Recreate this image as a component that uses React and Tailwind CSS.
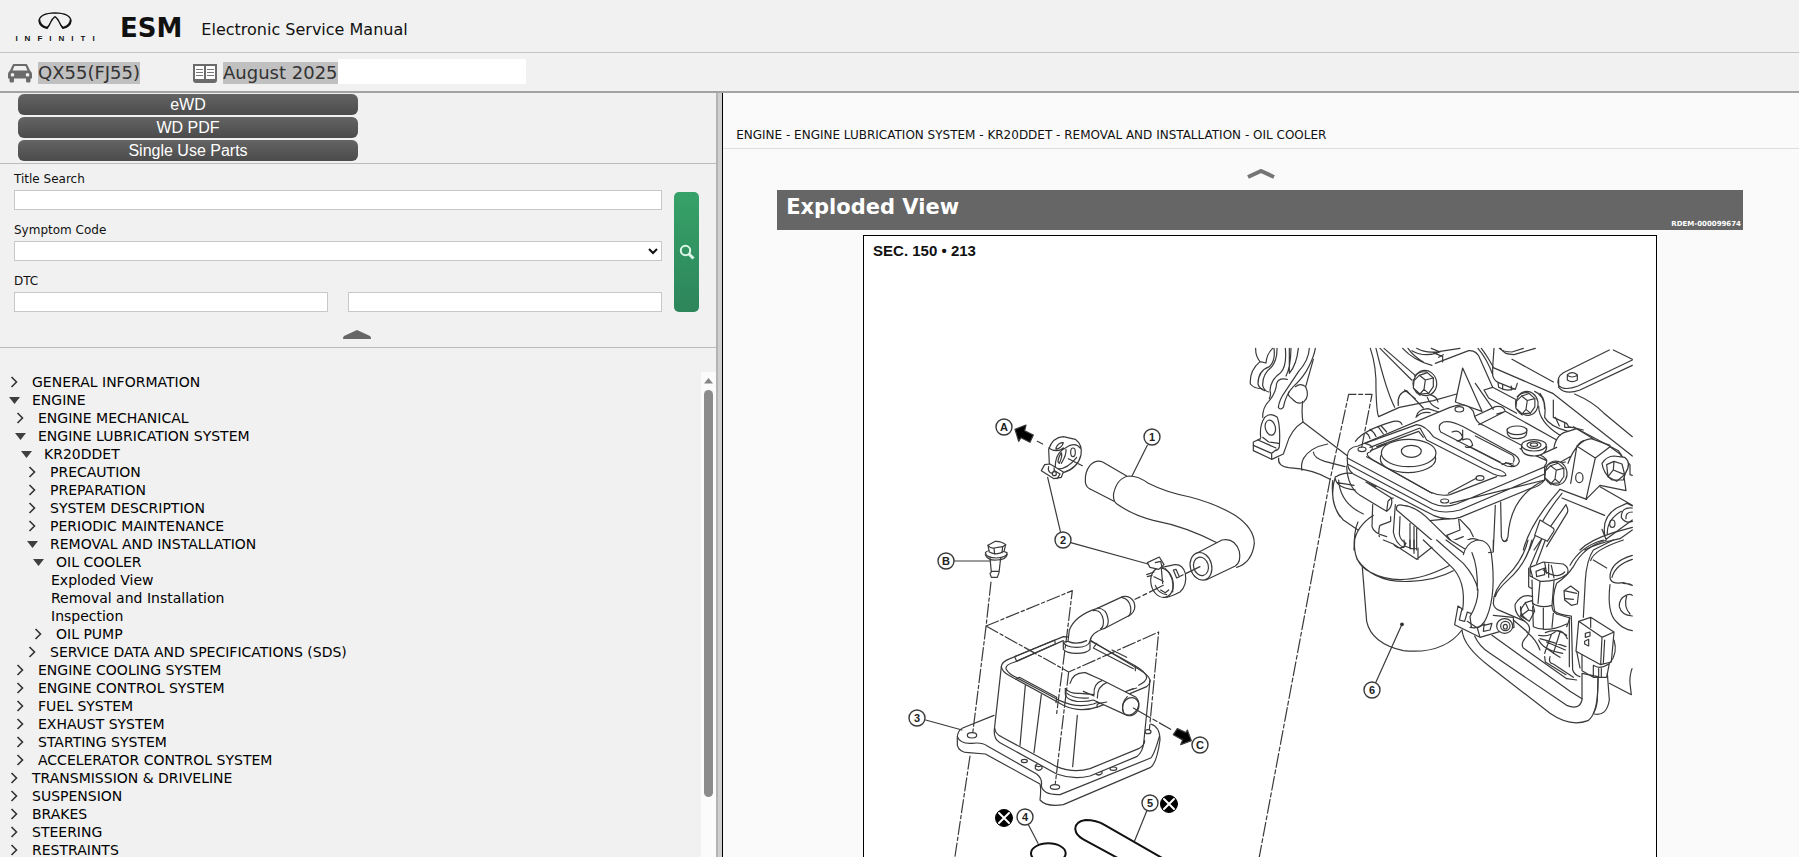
import { Fragment } from "react";

const TREE = [
  { label: "GENERAL INFORMATION" },
  {
    label: "ENGINE",
    children: [
      { label: "ENGINE MECHANICAL" },
      {
        label: "ENGINE LUBRICATION SYSTEM",
        children: [
          {
            label: "KR20DDET",
            children: [
              { label: "PRECAUTION" },
              { label: "PREPARATION" },
              { label: "SYSTEM DESCRIPTION" },
              { label: "PERIODIC MAINTENANCE" },
              {
                label: "REMOVAL AND INSTALLATION",
                children: [
                  {
                    label: "OIL COOLER",
                    children: [
                      { label: "Exploded View", leaf: true },
                      { label: "Removal and Installation", leaf: true },
                      { label: "Inspection", leaf: true },
                    ],
                  },
                  { label: "OIL PUMP" },
                ],
              },
              { label: "SERVICE DATA AND SPECIFICATIONS (SDS)" },
            ],
          },
        ],
      },
      { label: "ENGINE COOLING SYSTEM" },
      { label: "ENGINE CONTROL SYSTEM" },
      { label: "FUEL SYSTEM" },
      { label: "EXHAUST SYSTEM" },
      { label: "STARTING SYSTEM" },
      { label: "ACCELERATOR CONTROL SYSTEM" },
    ],
  },
  { label: "TRANSMISSION & DRIVELINE" },
  { label: "SUSPENSION" },
  { label: "BRAKES" },
  { label: "STEERING" },
  { label: "RESTRAINTS" },
];

const CALLOUTS = [
  { id: "A", x: 1004, y: 427 },
  { id: "1", x: 1152, y: 437 },
  { id: "2", x: 1063, y: 540 },
  { id: "B", x: 946, y: 561 },
  { id: "3", x: 917, y: 718 },
  { id: "C", x: 1200, y: 745 },
  { id: "4", x: 1025, y: 817 },
  { id: "5", x: 1150, y: 803 },
  { id: "6", x: 1372, y: 690 },
];

function InfinitiLogo() {
  return (
    <a href="#" className="flex w-[80px] flex-col items-center text-[#111]">
      <svg width="34" height="18" viewBox="0 0 100 52" fill="none" stroke="currentColor">
        <path
          d="M50 13 Q42 20 38 28 Q32 41 26 47 Q4 42 3 25 Q6 3 50 2 Q94 3 97 25 Q96 42 74 47 Q68 41 62 28 Q58 20 50 13"
          strokeWidth="4"
        />
        <path d="M3 25 Q6 44 28 49 L36 34 Q30 43 25 43 Q8 38 6 22 Z M97 25 Q94 44 72 49 L64 34 Q70 43 75 43 Q92 38 94 22 Z" fill="currentColor" strokeWidth="1" />
      </svg>
      <span className="mt-1 pl-[7px] text-[8px] font-bold leading-[10px] tracking-[7px] font-['Liberation_Sans',sans-serif]">
        INFINITI
      </span>
    </a>
  );
}

function CarIcon() {
  return (
    <svg width="24" height="19" viewBox="0 0 24 19" className="mb-px shrink-0 text-[#6b6b6b]">
      <path
        fill="currentColor"
        fillRule="evenodd"
        d="M6 0 H18 Q19 0 19.400 1 L22 6.500 Q24 8 24 10 V14.500 H22.500 V17 Q22.500 18.500 21 18.500 H19.500 Q18 18.500 18 17 V14.500 H6 V17 Q6 18.500 4.500 18.500 H3 Q1.500 18.500 1.500 17 V14.500 H0 V10 Q0 8 2 6.500 L4.600 1 Q5 0 6 0 Z M6.500 2 L4.500 6.500 H19.500 L17.500 2 Z M4.500 9 A1.800 1.800 0 1 0 4.510 9 Z M19.500 9 A1.800 1.800 0 1 0 19.510 9 Z"
      />
    </svg>
  );
}

function BookIcon() {
  return (
    <svg width="24" height="19" viewBox="0 0 24 19" className="mb-px shrink-0">
      <path d="M0 0 H24 V16 Q24 19 21 19 H3 Q0 19 0 16 Z" fill="#6b6b6b" />
      <path d="M2 2 H11 V15 H2 Z M13 2 H22 V15 H13 Z" fill="#fff" />
      <path d="M3 5.500 H10 M3 8.500 H10 M3 11.500 H10 M14 5.500 H21 M14 8.500 H21 M14 11.500 H21" stroke="#777" />
    </svg>
  );
}

function TreeNode({ node }) {
  if (node.leaf) {
    return (
      <li>
        <a href="#" className="block h-[18px] pl-[21px]">
          {node.label}
        </a>
      </li>
    );
  }
  return (
    <li>
      <button type="button" className="flex h-[18px] items-center gap-2 whitespace-nowrap pl-2">
        <svg width="16" height="14" viewBox="0 0 16 14" fill="none">
          {node.children ? (
            <path d="M1 4 H12 L6.500 11 Z" fill="#3f3f3f" />
          ) : (
            <path d="M3.500 2 L8.500 7 L3.500 12" stroke="#333" strokeWidth="1.600" />
          )}
        </svg>
        {node.label}
      </button>
      {node.children && <Tree nodes={node.children} nested />}
    </li>
  );
}

function Tree({ nodes, nested }) {
  return (
    <ul className={nested ? "pl-[6px]" : ""}>
      {nodes.map((n) => (
        <TreeNode key={n.label} node={n} />
      ))}
    </ul>
  );
}

// flanged hex bolt head, seen at an angle
function Bolt({ x, y, s = 1 }) {
  return (
    <g transform={`translate(${x} ${y}) scale(${s})`}>
      <ellipse cx="4" cy="0" rx="34" ry="38" fill="#fff" transform="rotate(-12)" />
      <path d="M-32 -12 Q-38 20 -12 36 M-28 -22 Q-12 -38 8 -34" />
      <path d="M-14 -24 L10 -32 L28 -16 V10 L14 30 L-12 32 L-32 14 L-30 -8 Z" fill="#fff" />
      <path d="M-14 -24 L4 -10 L28 -16 M4 -10 L0 18 L14 30 M0 18 L-12 32" />
    </g>
  );
}

function EngineArt() {
  return (
    <g transform="translate(1230 330) scale(0.33333)" strokeWidth="3.600">
      {/* bracket on the left */}
      <path d="M77 55 Q76 78 90 95 Q58 122 61 162 Q72 176 96 176 M90 95 L108 99 Q110 72 128 55" />
      <path d="M132 55 Q137 92 118 110 Q84 122 84 162 Q88 176 104 182 M141 55 Q142 90 124 112 Q97 132 98 166 Q102 182 116 186" />
      <path d="M166 55 Q171 108 152 128 Q122 148 120 182 Q124 192 118 206 M183 55 Q182 112 168 138 M205 55 Q200 104 178 130 V55" />
      <path d="M172 148 Q146 142 140 160 Q138 190 116 214 Q98 232 98 262" />
      <path d="M238 55 Q236 92 206 124 L166 184 Q148 208 145 232 Q150 242 160 232 Q168 192 190 170 Q222 140 236 110 Q252 80 256 55" />
      <path d="M250 88 L227 170 Q240 198 222 215 Q204 226 188 208 Q168 194 178 184 M196 170 Q212 158 226 170" />
      <path d="M218 214 Q214 248 219 276 Q182 298 168 350 L160 372 L125 388 L70 362 V336 L92 326" />
      <path d="M92 322 Q88 286 104 262 Q122 246 142 262 Q152 290 148 350 Q146 360 136 362 M98 322 L116 336 L146 340 M70 346 L125 370 V388 M125 370 L138 360 M84 330 L138 354" />
      <ellipse cx="121" cy="293" rx="15" ry="23" transform="rotate(-14 121 293)" />
      <path d="M146 384 Q142 408 176 413 Q250 418 300 448 M219 276 L350 376 M293 342 Q240 352 220 386 Q212 404 216 421 M250 366 Q252 384 284 394 L345 410" />

      {/* block behind the bracket plate */}
      <path d="M421 55 Q440 110 438 180 Q440 250 446 260 L508 232 L610 212 L680 192 M438 55 Q468 180 494 232 M450 55 L545 150 M462 55 L560 140 M518 55 Q552 92 606 106 M534 55 Q552 80 580 96 M546 62 Q582 84 630 66 L604 55 M560 55 Q590 72 630 64 L690 55 M610 68 L638 80 V96 M626 82 L640 74" />
      <path d="M616 100 L716 62 Q740 60 750 86 L788 172 M744 55 Q772 88 788 134 M754 55 Q770 75 790 112" />
      <path d="M676 216 L698 114 L756 244 M676 216 L756 244 M736 160 L790 238 M762 180 L788 172 L856 208 M762 180 L776 204 L860 250" />
      <path d="M505 226 Q500 190 530 182 L580 234 M524 180 L556 206 M592 202 Q600 226 626 236 M600 194 Q622 200 624 216" />
      <path d="M558 262 Q562 238 594 236 L626 246 M562 258 Q576 244 600 248" />
      <Bolt x={582} y={160} />

      {/* cover and lever, upper right */}
      <path d="M792 55 L788 112 L968 190 M788 112 V136 Q792 152 806 158 L856 178 L862 160 M846 88 L970 156 M812 55 Q820 74 852 74 L916 55 M808 55 Q820 66 846 66 L880 55" />
      <path d="M804 158 L806 172 Q830 186 852 176 M818 164 V178 M844 168 V180" />
      <path d="M1138 60 L1000 128 Q978 142 986 166 Q1002 184 1044 168 L1207 90 M986 148 V172 Q1006 196 1050 180 L1207 106 M1150 60 L1207 88" />
      <path d="M1012 134 Q1026 122 1042 134 V150 Q1026 160 1012 150 Z M1012 136 Q1026 146 1042 136" />
      <path d="M1034 192 Q1090 216 1120 248 L1207 320 M968 190 L1207 378 M930 190 Q950 214 944 262 Q960 290 1014 304 M914 184 Q944 196 944 236 M926 228 Q926 276 990 316 M970 210 V262 L1010 280 L1016 290 L1060 300 M976 262 L988 288 M1004 278 V292 L1024 292" />
      <Bolt x={888} y={221} s={0.95} />

      {/* hose bracket, right */}
      <path d="M972 352 Q980 310 1014 304 L1040 296 L1090 326 M1014 400 Q1040 330 1084 326 L1140 346 M1022 460 L1040 352 Q1050 330 1070 330 M1040 348 L1096 384 L1068 508 M1096 384 L1140 350 L1170 372 M1068 508 L1110 466 L1188 482 L1172 372 M988 398 L1020 380 M980 396 Q990 402 1006 396" />
      <ellipse cx="1048" cy="443" rx="11" ry="15" />
      <path d="M1030 290 L1165 362 L1180 384 L1200 404 V434 L1207 436" />
      <path d="M1184 382 Q1206 400 1186 430 L1180 450 L1146 450 Q1120 430 1116 400 Q1130 378 1152 378 Z" fill="#fff" />
      <path d="M1130 404 L1152 394 L1176 402 L1184 434 L1160 454 L1134 440 Z M1152 394 L1150 420 L1184 434 M1150 420 L1134 440" />
      <path d="M996 504 L1124 556 M990 478 L1070 508 M1110 470 L1207 526 M1124 614 Q1116 560 1160 534 L1190 520 L1207 528 M1132 612 Q1130 570 1174 544 M1116 598 L1128 628 L1207 570" />
      <ellipse cx="1147" cy="581" rx="8" ry="11" />
      <path d="M1207 534 Q1174 530 1174 562 Q1186 582 1207 574 M1207 546 Q1186 546 1188 566" />
      <path d="M1050 660 Q1080 630 1150 608 L1207 592 M1064 660 Q1100 640 1170 626 L1207 600" />

      {/* oil filter */}
      <path d="M397 712 L410 874 Q424 940 520 962 Q640 974 696 900 V760" fill="#fff" stroke="none" />
      <path d="M397 712 L410 874 Q424 940 520 962 Q640 974 696 900" />
      <path d="M374 630 Q368 700 420 726 Q520 780 660 706 M380 686 Q430 760 540 754 Q620 750 670 722 M372 640 Q378 590 430 556 M384 576 Q372 600 372 660" />
      <path d="M316 440 Q292 520 340 570 L384 600 M326 450 Q330 520 400 552 M318 440 Q340 426 366 430 M322 458 L372 466 M316 446 Q320 474 376 480 M308 452 Q302 520 330 560" />

      {/* cooler mounting plate */}
      <path
        d="M352 384 Q350 352 384 348 L660 232 Q710 212 730 244 Q736 280 760 286 L940 380 Q958 392 944 408 L944 450 Q930 470 900 476 L690 562 Q650 574 610 556 L370 432 Q350 420 352 384 Z"
        fill="#fff"
      />
      <path d="M352 384 L606 520 Q640 536 680 522 L946 410 M352 402 L610 540 Q645 552 690 540 L944 432 M660 520 L944 450" />
      <path d="M420 352 L570 294 L590 330 L790 432 Q812 442 828 436 Q828 424 790 414 L610 320 Q586 286 560 284 L404 340 Q440 348 420 366 Q396 372 440 396 L600 486 Q630 500 660 494 L800 440" />
      <path d="M410 380 L606 490 M655 490 L740 444 M422 362 L470 342 M440 350 L566 304 L580 322" />
      <path d="M640 276 Q620 286 632 306 L830 408 Q862 416 868 394 Q866 380 846 370 L700 290 Q660 270 640 276 Z" />
      <path d="M666 306 Q690 296 698 322 Q690 336 680 332 M698 300 V330 Q722 318 728 346 Q716 356 706 350 M736 318 L848 376 Q856 386 850 396 M720 350 L810 396 M816 404 Q830 394 844 406 L852 408 M826 398 L850 402" />
      <ellipse cx="534" cy="386" rx="83" ry="42" fill="#fff" />
      <ellipse cx="536" cy="369" rx="82" ry="41" fill="#fff" />
      <ellipse cx="544" cy="364" rx="30" ry="18" />
      <ellipse cx="688" cy="238" rx="13" ry="8" />
      <ellipse cx="396" cy="358" rx="12" ry="7" />
      <ellipse cx="750" cy="444" rx="12" ry="7" />
      <ellipse cx="644" cy="513" rx="12" ry="6" />
      <path d="M736 258 L796 230 Q820 226 826 244 L746 284 M826 244 L980 330 M800 252 L820 246 M870 356 L950 392 M940 370 L980 352 M900 376 Q870 350 876 344" />
      <path d="M832 296 V310 Q836 326 862 326 Q890 324 890 308 V296" fill="#fff" />
      <ellipse cx="861" cy="301" rx="30" ry="13" fill="#fff" />
      <path d="M875 346 V358 Q880 378 914 378 Q950 374 950 350" fill="#fff" />
      <ellipse cx="912" cy="346" rx="37" ry="17" fill="#fff" />
      <ellipse cx="912" cy="345" rx="21" ry="10" />
      <ellipse cx="912" cy="344" rx="11" ry="5" />
      <path d="M376 334 Q400 300 490 274 Q512 270 516 284 M420 298 Q434 308 438 320 M446 292 L460 312 M454 288 L470 306 M406 308 Q416 312 420 326" />
      <Bolt x={975} y={430} s={0.95} />

      {/* housing below the plate */}
      <path d="M350 408 Q352 470 390 496 L470 544 Q490 530 484 504 L408 456 M408 456 L438 470 M470 544 L474 514 Q480 504 490 504 M428 524 L426 590 Q430 610 470 620 M482 560 V574 L450 586 Q444 600 448 620 M496 524 L490 606 Q496 640 520 652 M510 560 L508 612 Q510 630 528 640 L520 652" />
      <path d="M500 540 Q496 520 520 526 Q560 530 600 572 L690 660 M500 540 L640 660 M540 580 V654 L524 648 M552 590 V660 M560 596 V660" />
      <path d="M600 572 L658 566 M686 568 L690 600 L650 616 L664 634 L700 620 M690 568 L720 600 L730 620 M700 640 Q720 620 740 628 Q770 640 776 660 M796 526 L790 660 M812 516 L814 620 Q822 650 834 620 Q840 500 944 450" />
      <path d="M990 478 Q900 580 880 660 M996 490 Q930 570 898 660 M1008 524 L940 620 L912 660 M1008 524 Q1016 540 1012 548 L950 650" />
      <path d="M930 570 L966 592 Q976 596 970 606 L952 634 L914 616 Z" fill="#fff" />

      <g transform="translate(0 630)">
        {/* coolant pipes */}
        <path
          d="M696 270 Q700 320 780 380 L960 520 Q1020 562 1074 542 Q1106 520 1104 410 L1056 400 V480 Q1048 512 1010 496 L780 340 Q748 320 734 288"
          fill="#fff"
        />
        <path d="M786 286 L1020 454 L1056 476 M1132 400 L1138 480 Q1130 530 1092 522 M1104 410 L1102 480 Q1100 505 1090 520" />
        <path
          d="M580 0 L660 76 Q710 120 698 210 L720 262 Q756 270 770 232 Q800 160 784 40 Q778 0 740 0 L660 0 Z"
          fill="#fff"
          stroke="none"
        />
        <path d="M580 0 L660 76 Q710 120 698 210 M720 262 Q756 270 770 232 Q800 160 784 40 Q778 0 740 0 Q708 10 700 44 M620 0 L700 70 Q736 110 744 150 Q744 190 720 230 L724 260 M648 0 L700 38 M660 0 L704 26 M742 150 Q744 80 726 38" />
        <path d="M460 0 L490 12 L560 58 L606 22 M540 0 V26 L556 26 M564 24 V58 M552 0 V40 M490 12 Q502 30 524 20 L522 0" />

        {/* lower clip */}
        <path d="M684 198 L674 254 L750 292 L852 262 L850 232 L790 226 M684 198 L696 206 L688 240 L704 244 L712 216 L722 220 M712 244 L742 264 L750 292 M762 256 L786 250 L780 270 L760 274 Z M742 264 L764 252" />
        <ellipse cx="824" cy="258" rx="24" ry="22" fill="#fff" />
        <ellipse cx="826" cy="258" rx="14" ry="14" />
        <ellipse cx="826" cy="260" rx="6" ry="7" />

        {/* solenoid and harness */}
        <path d="M894 0 Q880 60 830 110 Q790 150 790 190 Q792 206 810 212 L880 242 M906 0 Q890 70 836 118 Q800 150 796 170 M934 0 L900 80 M946 0 L920 70 M818 0 Q824 8 832 0 M790 0 V36 L776 38" />
        <path d="M900 82 L940 66 L1000 72 Q1020 84 1012 102 Q980 126 930 124 L900 108 Z M900 82 L908 112 M918 94 L944 84 V104 L920 110 Z M956 72 V112 M964 76 L972 114 M944 68 L950 100 M940 90 Q980 120 1004 96" fill="#fff" />
        <path d="M906 120 L908 190 Q930 206 966 196 L972 122 M930 124 L924 190 M966 196 Q966 216 980 222 M896 84 V140 L906 146" />
        <path d="M884 244 Q850 220 856 192 Q876 158 908 170 M892 240 Q868 224 872 200 M874 206 L886 188 L906 182 L914 214 L898 244 L872 228 Z M886 188 L896 210 L914 214 M896 210 L872 228" />
        <path d="M908 200 L910 260 Q950 280 1010 252 M940 204 V268 M970 220 L966 262 M980 222 L1020 234 L1010 260 M884 244 Q910 262 890 290 Q870 310 880 324 L1010 416 L1040 420 M850 240 L892 276 M890 276 Q920 300 930 330" />
        <path d="M926 286 Q960 292 980 272 Q1000 270 1012 296 M930 296 Q980 310 1008 320 M926 300 Q940 330 998 340 M940 318 Q970 340 990 352 M946 278 Q980 262 1010 286 M950 306 L1006 330 M944 350 L946 366 L1008 404 M960 350 Q954 370 970 372 L1030 412 M964 284 Q950 320 944 340 M990 276 L970 340" />
        <path d="M1150 0 L1090 30 Q1070 60 1066 120 L1060 232 M1180 0 Q1090 30 1082 62 M1130 0 Q1060 20 1030 80 Q1010 110 980 130 Q964 170 974 214 Q990 226 1024 228 L1028 390 Q1034 406 1050 410 M1090 60 L1130 84 M1120 0 Q1050 20 1020 76 M1018 232 L1018 380" />
        <path d="M1002 152 L1022 138 L1046 156 L1042 192 L1024 196 L1004 180 Z M1002 152 L1040 160 M1006 176 L1030 178" />
        <path d="M1207 46 Q1140 66 1140 112 Q1142 134 1180 128 L1207 136 M1207 58 Q1156 74 1146 112 M1180 130 Q1200 130 1207 136 M1140 134 Q1130 220 1160 246 Q1180 268 1207 272 M1188 166 Q1166 176 1168 200 Q1174 226 1207 228 M1188 166 Q1200 160 1207 166 M1190 168 Q1180 200 1200 222" />
        <path d="M1046 244 L1082 232 L1152 276 L1144 366 L1112 374 L1038 334 Z M1046 244 L1116 292 L1112 374 M1116 292 L1152 276 M1082 232 V262 M1124 300 L1120 370" fill="#fff" />
        <path d="M1066 280 L1080 276 V288 L1066 292 Z M1064 304 L1076 298 V318 L1064 312 Z M1152 300 Q1164 340 1140 368 M1056 344 V392 L1090 412 H1130 L1138 370 M1090 376 V412 M1106 386 V412 M1114 386 V410 M1040 334 L1050 384 M1090 376 Q1110 390 1136 372" />
        <path d="M1138 430 L1204 464 L1200 430 Q1198 410 1206 386" />
        <circle cx="516" cy="253" r="4" fill="#000" />
        <path d="M516 253 L437 428" />
      </g>
      <path d="M395 352 L426 193 H356 L300 450 L88 1580 L60 1730" strokeDasharray="42 8 12 8" />
    </g>
  );
}

function CoolerArt() {
  return (
    <g transform="translate(900 400) scale(0.33333)" strokeWidth="3.600">
      {/* outlet arrow and upper clamp */}
      <path d="M345 88 L378 75 L374 92 L400 105 L390 127 L363 113 L356 124 Z" fill="#000" />
      <path d="M412 124 L428 132 M505 176 L547 197" />
      <path d="M446 148 Q458 112 490 110 L526 118 Q548 134 543 165 Q534 204 490 218 M446 148 L448 192 M466 206 Q464 160 496 144 Q526 124 540 144 M446 144 Q470 160 490 144" />
      <path d="M470 206 Q500 210 530 172 M478 190 Q488 168 484 158 Q474 174 474 186 Z M484 190 Q500 164 498 148" />
      <path d="M468 144 Q474 128 490 128 Q486 144 468 148 Z" />
      <ellipse cx="519" cy="157" rx="7" ry="13" />
      <path d="M434 194 L424 212 L462 236 L484 232 L490 216 L450 192 Z M446 200 Q442 214 454 220 Q466 214 462 204 M464 212 L480 222 L472 236" fill="#fff" />
      <ellipse cx="463" cy="221" rx="6" ry="6" />

      {/* hose */}
      <path d="M680 228 L608 186 Q588 178 570 196 Q554 216 556 246 Q558 262 572 268 L642 304" />
      <path d="M1010 502 Q1056 488 1063 430 Q1062 384 1005 346 Q950 312 870 291 Q800 278 745 250 Q715 228 688 228 Q652 232 641 280 Q638 304 652 313 Q700 346 760 361 Q860 380 954 430" />
      <path d="M890 460 L966 420 Q1004 412 1018 454 Q1024 486 1006 498 L918 540" fill="#fff" />
      <ellipse cx="903" cy="499" rx="32" ry="42" fill="#fff" transform="rotate(-15 903 499)" />
      <ellipse cx="903" cy="499" rx="22" ry="28" transform="rotate(-15 903 499)" />
      <path d="M742 136 L696 228 M443 232 L482 398 M512 428 L744 492" />
      <path d="M900 500 L838 530 M790 556 L705 598" strokeDasharray="46 10 12 10" />

      {/* lower clamp */}
      <path d="M786 502 L824 494 Q848 492 856 520 Q862 556 840 576 Q806 594 790 592" />
      <ellipse cx="786" cy="548" rx="33" ry="45" transform="rotate(-14 786 548)" />
      <path d="M742 488 L778 471 L792 494 L776 508 L750 502 Z" fill="#fff" />
      <path d="M766 488 L782 484 L786 500 M740 524 L762 516 M742 530 L756 526 M796 506 Q824 530 818 576 M762 530 L790 544 M784 506 L788 550 M782 570 L796 578 L806 570 M820 510 L828 508 L838 530 L830 534 Z M766 556 Q774 580 800 584" />

      {/* bolt */}
      <path d="M270 474 L274 516 L270 520 L274 532 H292 L297 518 L302 474 M274 514 H296" />
      <path d="M256 458 Q258 474 290 474 Q322 472 321 458 Q300 450 290 450 Q260 450 256 458 Z" fill="#fff" />
      <path d="M264 436 L268 456 Q290 468 312 454 L317 434 Q304 423 286 424 Z" fill="#fff" />
      <path d="M264 436 Q272 446 282 444 L308 440 L317 434 M282 444 L284 462 M308 440 L306 458 M256 464 Q264 482 290 480 Q318 480 322 462" />
      <path d="M162 483 H272" />

      <g transform="translate(0 510)">
        {/* flange */}
        <path
          d="M282 436 L188 474 Q170 482 172 510 V526 Q178 548 206 548 L256 552 L420 642 Q424 656 420 690 Q440 712 490 704 L752 592 Q770 580 780 510 Q780 470 752 462"
          fill="#fff"
        />
        <path d="M172 500 Q180 522 216 520 Q246 516 262 528 L410 612 Q428 626 424 648 Q430 676 480 674 L752 564 Q762 556 778 500" />
        <ellipse cx="216" cy="496" rx="14" ry="8" />
        <ellipse cx="465" cy="651" rx="14" ry="7" />
        <ellipse cx="744" cy="485" rx="9" ry="6" />
        <ellipse cx="373" cy="573" rx="9" ry="5" />
        <ellipse cx="640" cy="596" rx="10" ry="5" />
        <path d="M406 586 V596 Q416 606 426 596 V586 Q416 576 406 586 Q416 594 426 586 M586 602 V610 Q596 620 606 610 V602 Q596 592 586 602 Q596 610 606 602" />

        {/* cooler core */}
        <path
          d="M304 290 L284 470 Q278 506 300 518 L470 612 Q520 630 570 618 L710 560 Q730 546 732 510 L750 330 Q746 316 720 300 L560 204 L490 200 L330 266 Q304 276 304 290 Z"
          fill="#fff"
        />
        <path d="M284 474 Q286 492 304 500 L470 590 Q520 610 570 596 L716 536 Q734 526 734 512" />
        <path d="M304 290 Q306 306 330 318 L490 406 Q540 430 596 410 L740 350 Q752 340 750 330 M318 296 Q316 284 344 276 L490 212 M318 296 Q324 310 348 322 L480 392 Q530 416 580 402 L700 356 M570 212 L700 284 Q740 306 740 322 Q740 334 716 346" />
        <path d="M344 260 L464 210 L466 222 L350 274 Z M348 328 L358 322 L470 382 L468 398 M590 220 L580 234 L700 296 M636 240 L680 262 M706 288 V302 M690 360 L710 354" />
        <path d="M376 346 L360 526 M424 374 L402 548 M532 436 L518 590" />

        {/* inlet pipe */}
        <path
          d="M490 216 V238 Q500 250 530 250 Q560 250 570 238 V214 Q572 188 616 174 L692 134 Q710 120 702 96 Q690 76 668 80 L590 116 Q526 136 508 180 L504 214 Z"
          fill="#fff"
        />
        <path d="M490 216 Q496 232 530 232 Q564 232 570 214 M504 214 Q530 226 560 212 M580 122 Q604 118 610 150 Q612 172 602 176 M592 114 Q620 116 624 146 Q628 168 612 176 M664 82 Q688 86 692 112 Q694 130 686 138" />

        {/* outlet pipe */}
        <path d="M510 340 Q520 306 556 308 L606 330 L708 382 Q722 396 712 418 Q696 440 676 434 L580 390 Q560 396 530 394 Q500 390 496 374 V356" fill="#fff" />
        <path d="M496 356 Q510 372 540 370 L582 374 M498 368 Q520 388 566 384 M606 332 Q580 340 582 374 M620 338 Q592 348 592 384 M550 364 L582 378" />
        <ellipse cx="692" cy="410" rx="24" ry="28" transform="rotate(28 692 410)" />
        <path d="M670 426 Q662 400 682 380" />
        <path d="M592 412 Q588 402 598 400 L620 396" />
        <path d="M820 494 L832 476 L858 488 L862 480 L874 512 L842 524 L848 510 Z" fill="#000" />
        <path d="M700 414 L812 478" strokeDasharray="60 8 14 8" />
        <path d="M77 450 L186 480 M740 724 L704 812 M386 766 L414 820" />

        {/* seals */}
        <g strokeWidth="6" stroke="#111">
          <ellipse cx="445" cy="850" rx="52" ry="30" />
          <path d="M790 866 L612 764 Q590 750 556 750 Q524 756 526 778 Q528 796 550 808 L664 870" />
        </g>
      </g>
      <path d="M273 546 L258 680 L218 1000 M210 1068 L164 1376 M258 678 L517 572 L502 694 L470 940 M258 678 L506 816 L776 696 L748 990 M506 816 L466 1150" strokeDasharray="40 8 10 8" />
    </g>
  );
}

function ExplodedDiagram() {
  return (
    <svg
      viewBox="864 266 792 650"
      className="block w-full"
      fill="none"
      stroke="#3a3a3a"
      strokeLinecap="round"
      strokeLinejoin="round"
      role="img"
      aria-label="Oil cooler exploded view"
    >
      <EngineArt />
      <CoolerArt />
      {CALLOUTS.map((c) => (
        <Fragment key={c.id}>
          <circle cx={c.x} cy={c.y} r="8" fill="#fff" strokeWidth="1.400" />
          <text
            x={c.x}
            y={c.y + 4}
            textAnchor="middle"
            fontSize="11"
            fill="#222"
            stroke="none"
            className="font-bold font-['Liberation_Sans',sans-serif]"
          >
            {c.id}
          </text>
        </Fragment>
      ))}
      {[[1004, 818], [1169, 804]].map(([x, y]) => (
        <g key={x}>
          <circle cx={x} cy={y} r="8.500" fill="#000" stroke="#000" />
          <path d={`M${x - 5} ${y - 5} l10 10 m0 -10 l-10 10`} stroke="#fff" strokeWidth="2" />
        </g>
      ))}
    </svg>
  );
}

function SearchForm() {
  const box = "h-[20px] w-full border border-[#c8c8c8] bg-white";
  const label = "block h-[18px] leading-[15px]";
  return (
    <form className="border-b border-[#bbb] pl-[14px] pr-[17px] pt-2">
      <div className="flex gap-3">
        <div className="flex flex-1 flex-col gap-[13px]">
          <div>
            <label htmlFor="title" className={label}>Title Search</label>
            <input id="title" type="text" className={box} />
          </div>
          <div>
            <label htmlFor="symptom" className={label}>Symptom Code</label>
            <select id="symptom" className={box}>
              <option></option>
            </select>
          </div>
          <div>
            <label htmlFor="dtc" className={label}>DTC</label>
            <div className="flex gap-5">
              <input id="dtc" type="text" className={box} />
              <input type="text" aria-label="DTC second code" className={box} />
            </div>
          </div>
        </div>
        <button
          type="button"
          aria-label="Search"
          className="mt-5 flex h-[120px] w-[25px] items-center justify-center rounded-[5px] bg-linear-to-b from-[#36a269] to-[#2d855a]"
        >
          <svg width="18" height="18" viewBox="0 0 18 18" fill="none" stroke="#dcf5e6">
            <circle cx="7.500" cy="7.500" r="4.700" strokeWidth="2" />
            <path d="M11 11 L15.500 15.500" strokeWidth="3" />
          </svg>
        </button>
      </div>
      <button type="button" aria-label="Collapse search" className="mx-auto flex h-[35px] items-center pt-[10px]">
        <svg width="28" height="9" viewBox="0 0 28 9">
          <path d="M14 0 L27 6 Q28 7 28 9 H0 Q0 7 1 6 Z" fill="#666" />
        </svg>
      </button>
    </form>
  );
}

function Sidebar() {
  return (
    <aside className="flex w-[40.2%] shrink-0">
      <div className="flex min-w-0 flex-1 flex-col text-[12px]">
        <div className="flex flex-col gap-[2px] border-b border-[#bbb] pb-[2px] pl-[18px] pt-[1px]">
          {["eWD", "WD PDF", "Single Use Parts"].map((label) => (
            <button
              key={label}
              type="button"
              className="h-[21px] w-[340px] rounded-[6px] bg-linear-to-b from-[#646464] to-[#4b4b4b] text-[16px] leading-[20px] text-white font-['Liberation_Sans',sans-serif]"
            >
              {label}
            </button>
          ))}
        </div>
        <SearchForm />
        <div className="flex min-h-0 flex-1 pt-6">
          <nav className="min-w-0 flex-1 overflow-hidden pt-px text-[14px] leading-[18px] text-black">
            <Tree nodes={TREE} />
          </nav>
          <div className="flex w-[15px] flex-col items-center bg-[#fbfbfb] pt-[6px]">
            <svg width="9" height="6" viewBox="0 0 9 6">
              <path d="M4.500 0 L9 5.500 H0 Z" fill="#858585" />
            </svg>
            <div className="mt-[6px] h-[85%] w-[9px] rounded-full bg-[#8b8b8b]" />
          </div>
        </div>
      </div>
      <div className="w-[7px] border-l-2 border-r border-l-[#b4b4b4] border-r-black bg-[#cfcfcf]" />
    </aside>
  );
}

export default function App() {
  return (
    <div className="flex h-screen flex-col overflow-hidden bg-[#f1f1f1] text-[#111] font-['DejaVu_Sans',sans-serif]">
      <header>
        <div className="flex h-[53px] items-center border-b border-[#c4c4c4] pl-[15px] pt-1">
          <InfinitiLogo />
          <span className="ml-[25px] text-[26px] font-bold">ESM</span>
          <span className="ml-[19px] pt-1 text-[16px]">Electronic Service Manual</span>
        </div>
        <div className="flex h-[40px] items-end border-b-2 border-[#a3a3a3] pb-[7px] pl-2 text-[18px] leading-[22px] text-[#333]">
          <CarIcon />
          <span className="ml-[6px] bg-[#c0c0c0]">QX55(FJ55)</span>
          <span className="ml-[53px] flex items-end">
            <BookIcon />
            <span className="ml-[6px] flex w-[303px] items-end">
              <span className="bg-[#c0c0c0]">August 2025</span>
              <span className="h-[25px] flex-1 bg-white" />
            </span>
          </span>
        </div>
      </header>

      <div className="flex min-h-0 flex-1">
        <Sidebar />
        <main className="min-w-0 flex-1 overflow-hidden bg-[#fafafa]">
          <div className="h-[56px] border-b border-[#ddd] pl-[13px] pt-[33px] text-[12px] leading-[18px]">
            ENGINE - ENGINE LUBRICATION SYSTEM - KR20DDET - REMOVAL AND INSTALLATION - OIL COOLER
          </div>
          <button type="button" aria-label="Scroll up" className="mx-auto block pb-[11px] pt-5">
            <svg width="30" height="10" viewBox="0 0 30 10" fill="none">
              <path d="M2 8 L15 2 L28 8" stroke="#757575" strokeWidth="4" />
            </svg>
          </button>
          <article className="pl-[54px] pr-14">
            <div className="flex h-[40px] items-center justify-between bg-[#666] pl-[9px] text-white">
              <h1 className="pb-[4px] text-[21px] font-bold">Exploded View</h1>
              <span className="self-end pr-[2px] text-[7px] font-bold leading-[12px]">RDEM-000099674</span>
            </div>
            <figure className="mx-auto mt-[5px] max-w-[794px] border border-black bg-white">
              <figcaption className="h-[30px] pl-[9px] text-[15px] font-bold leading-[30px] font-['Liberation_Sans',sans-serif]">
                SEC. 150 • 213
              </figcaption>
              <ExplodedDiagram />
            </figure>
          </article>
        </main>
      </div>
    </div>
  );
}
